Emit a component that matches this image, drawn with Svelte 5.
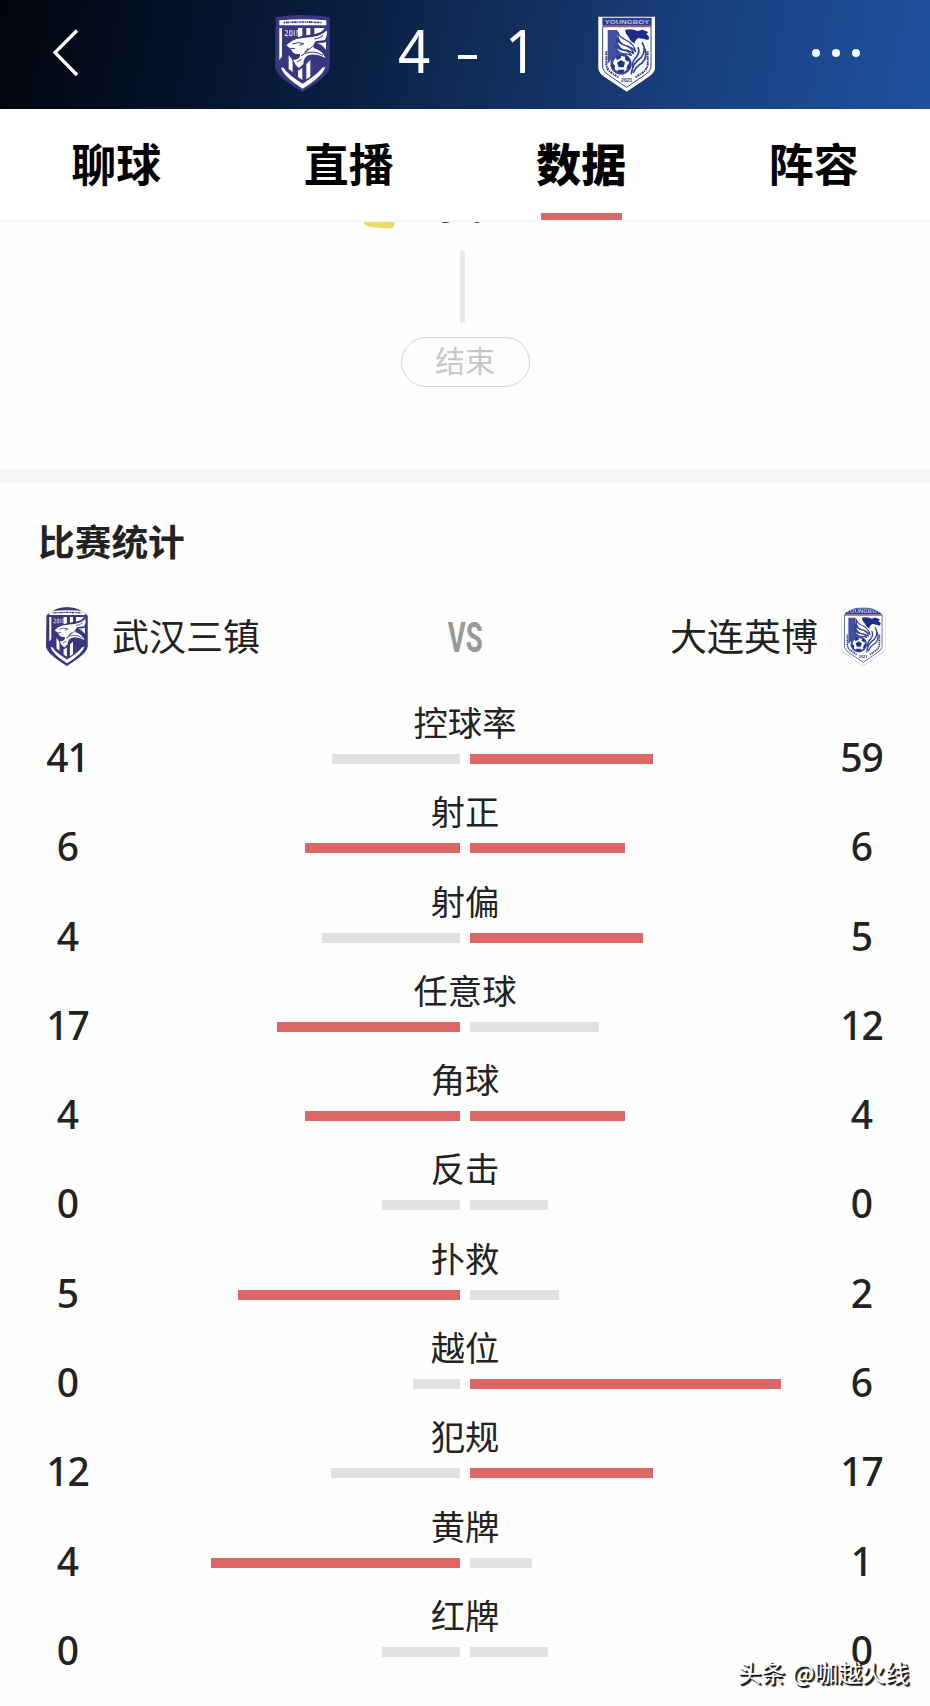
<script>
  const tabs = ['聊球', '直播', '数据', '阵容'];
  const active = '数据';

  const stats = [
    { label: '控球率', home: 41, away: 59, hw: 128, aw: 183 },
    { label: '射正', home: 6, away: 6, hw: 155, aw: 155 },
    { label: '射偏', home: 4, away: 5, hw: 138, aw: 173 },
    { label: '任意球', home: 17, away: 12, hw: 183, aw: 129 },
    { label: '角球', home: 4, away: 4, hw: 155, aw: 155 },
    { label: '反击', home: 0, away: 0, hw: 78, aw: 78 },
    { label: '扑救', home: 5, away: 2, hw: 222, aw: 89 },
    { label: '越位', home: 0, away: 6, hw: 47, aw: 311 },
    { label: '犯规', home: 12, away: 17, hw: 129, aw: 183 },
    { label: '黄牌', home: 4, away: 1, hw: 249, aw: 62 },
    { label: '红牌', home: 0, away: 0, hw: 78, aw: 78 }
  ];
</script>

{#snippet homeCrest(cls)}
  <svg class={cls} viewBox="28 31 165 231" aria-hidden="true">
    <path d="M30 37Q110 25 192 37V186Q190 214 110 262Q30 214 28 186Z" fill="#37387f" />
    <path d="M41 47Q110 40 182 47V62H41Z" fill="#fff" />
    <path d="M54 54Q110 50 169 54" fill="none" stroke="#37387f" stroke-width="5" stroke-dasharray="5 2 9 2 3 2" />
    <g fill="#fff">
      <path d="M41 70h8v86l-8 10z" />
      <path d="M97 70h13v24l-13 4zM122 70h12v20l-12 2zM146 70h32l-12 12-20 7z" />
      <path d="M181 112v24q-10-16-28-22 16 2 28-2z" />
      <path d="M69 152l12 14v36l-12-9zM97 198l13-8v36l-13-9zM122 178l12-12v50l-12 8z" />
      <path d="M46 188l8 2q12 20 57 47 44-27 58-47l10-4q-7 28-68 66-58-36-65-64z" />
    </g>
    <path d="M62 122Q75 108 92 103 120 98 140 97 170 92 183 77 186 92 178 106L150 110Q142 118 144 130 168 136 180 160 150 146 130 151 114 156 113 178L100 190Q88 181 82 166L94 164Q105 158 103 149L88 147Q78 143 76 134Z" fill="#fff" stroke="#37387f" stroke-width="6" paint-order="stroke" />
    <g fill="none" stroke="#37387f" stroke-width="3">
      <path d="M80 118Q98 110 114 117L102 122M74 131L88 132M116 143Q136 133 148 118M120 146Q142 136 172 152M106 154Q122 148 128 130M94 172L108 164M146 103Q162 102 172 92" />
    </g>
    <path d="M78 149L99 151Q99 160 84 162Z" fill="#37387f" />
    <path d="M58 78q9-3 8 5l-8 10h10M72 78h7v15h-7zM86 77v17M91 78h6l-4 7q8 4-2 8" fill="none" stroke="#fff" stroke-width="2.500" />
  </svg>
{/snippet}

{#snippet awayCrest(cls)}
  <svg class={cls} viewBox="23 31 171 228" aria-hidden="true">
    <path d="M24 33H194V190Q190 205 171 216L109 258 46 216Q27 205 24 190Z" fill="#fff" />
    <path d="M37 64V187Q41 199 54 208L109 245 163 208Q179 199 182 187V64" fill="none" stroke="#33468f" stroke-width="3" />
    <path d="M36 36H184V60H36Z" fill="#2c3f8e" />
    <path d="M36 60H184V65H36Z" fill="#b2526c" />
    <text x="110" y="54" text-anchor="middle" textLength="134" lengthAdjust="spacingAndGlyphs" font-family="Liberation Sans" font-weight="700" font-size="18" fill="#b9c4e8">YOUNGBOY</text>
    <path d="M52 73H80V92L98 128 84 150 65 160 52 174Z" fill="#4551a0" />
    <path d="M104 73q18-6 38 3l14-4 18 7-6 6 9 9-3 9-14-3-14-3q-10 2-13 16-12-4-17-17l-9-12z" fill="#1d2e86" />
    <g fill="#fff" stroke="#2c3d94" stroke-width="4" stroke-linejoin="round">
      <path d="M82 78q4 16 24 25 24 10 30 35-12-16-33-19-22-7-21-41z" />
      <path d="M78 98q6 16 26 21 22 7 26 25-13-11-31-11-19-8-21-35z" />
      <path d="M73 119q12 14 28 15 17 3 22 15-13-6-26-5-18-5-24-25z" />
    </g>
    <g fill="none" stroke="#2c3d94" stroke-width="5" stroke-linecap="round">
      <path d="M156 112q14 22-4 44-26 16-29 48" />
      <path d="M164 130q8 24-8 41-20 12-27 29" />
      <path d="M143 126q7 15-5 28-12 12-12 28" />
    </g>
    <circle cx="92" cy="175" r="28" fill="#fff" stroke="#3a499a" stroke-width="8" />
    <path d="M92 163l12 8-4 14H85l-5-14zM77 153l13-4 3 7-14 8zM107 151l10 8-3 9-11-7zM66 172l8 8-1 12-8-8zM112 177l8-4-3 15-9 2zM81 192h21l-3 9H85z" fill="#1f3187" />
    <path d="M48 137V176Q49 191 62 200L84 215M172 137V176Q170 191 158 200L135 215" fill="none" stroke="#26357c" stroke-width="6" stroke-dasharray="4 2 6 3" />
    <text x="109" y="228" text-anchor="middle" font-family="Liberation Sans" font-weight="700" font-size="15" fill="#26357c">2021</text>
  </svg>
{/snippet}

<main class="page">
  <header class="topbar">
    <svg class="back" viewBox="0 0 28 50" aria-hidden="true"><path d="M25 2.500L3 24.500 25 47" fill="none" stroke="#fff" stroke-width="3.300" /></svg>
    <div class="score">
      {@render homeCrest('crest')}
      <div class="digits"><span>4</span><i></i><span>1</span></div>
      {@render awayCrest('crest away')}
    </div>
    <div class="more"><i></i><i></i><i></i></div>
  </header>

  <nav class="tabs">
    {#each tabs as tab}
      <div class="tab" class:active={tab === active}><span>{tab}</span></div>
    {/each}
  </nav>

  <section class="timeline">
    <svg class="event" viewBox="0 0 120 8" aria-hidden="true">
      <path d="M0 0H32L31 4Q30 7 26 6.500L7 5Q2 4 0 0Z" fill="#ebd968" />
      <path d="M78 0H87Q82 2 78 0ZM111 0H117Q114 2 111 0Z" fill="#333" />
    </svg>
    <div class="stem"></div>
    <div class="pill">结束</div>
  </section>

  <section class="stats">
    <h2>比赛统计</h2>
    <div class="teams">
      <div class="team">{@render homeCrest('small')}<span>武汉三镇</span></div>
      <div class="vs"><span>VS</span></div>
      <div class="team right"><span>大连英博</span>{@render awayCrest('small away')}</div>
    </div>
    {#each stats as s}
      <div class="row">
        <div class="num">{s.home}</div>
        <div class="middle">
          <div class="label">{s.label}</div>
          <div class="bars">
            <div class="half left"><div class="bar" class:win={s.hw >= s.aw && s.home > 0} style:width="{s.hw}px"></div></div>
            <div class="half"><div class="bar" class:win={s.aw >= s.hw && s.away > 0} style:width="{s.aw}px"></div></div>
          </div>
        </div>
        <div class="num">{s.away}</div>
      </div>
    {/each}
  </section>
  <div class="watermark">头条 @咖越火线</div>
</main>

<style>
  :global(body) { background: #fefefe; }
  .page {
    position: relative;
    width: 930px;
    height: 1706px;
    overflow: hidden;
    background: #fefefe;
    color: #222;
    font-family: "Noto Sans CJK SC", sans-serif;
  }
  .topbar {
    display: grid;
    grid-template-columns: 223px 380px 1fr;
    align-items: center;
    box-sizing: border-box;
    height: 109px;
    padding: 0 70px 0 52px;
    background: linear-gradient(102deg, #01040a 0%, #041229 20%, #0a2145 40%, #12305f 56%, #1a4080 75%, #1f509f 100%);
  }
  .back { width: 28px; height: 50px; margin-top: -4px; }
  .score { display: flex; align-items: center; justify-content: space-between; }
  .crest { width: 55px; height: 77px; margin-top: -2px; }
  .crest.away { width: 57px; height: 76px; }
  .digits {
    display: flex;
    align-items: center;
    justify-content: space-between;
    width: 141px;
    height: 77px;
    margin-left: 7px;
    color: #fff;
    font: 400 60px/77px "Noto Sans", sans-serif;
  }
  .digits span { margin-top: -9px; transform: scaleX(.94); }
  .digits i { width: 19px; height: 4px; margin-top: 5px; background: #fff; }
  .more { display: flex; justify-content: flex-end; gap: 12px; margin-top: -3px; }
  .more i { width: 8px; height: 8px; border-radius: 50%; background: #eff9ff; }
  .tabs {
    display: grid;
    grid-template-columns: repeat(4, 1fr);
    height: 111px;
    border-bottom: 2px solid #f7f7f7;
    background: #fff;
  }
  .tab {
    display: flex;
    flex-direction: column;
    align-items: center;
    color: #000;
    font-size: 45px;
    font-weight: 700;
    line-height: 108px;
  }
  .tab span { height: 104px; }
  .tab.active { font-weight: 900; }
  .tab.active::after { content: ""; width: 81px; height: 7px; background: #d96966; }
  .timeline {
    display: flex;
    flex-direction: column;
    align-items: center;
    height: 247px;
    border-bottom: 14px solid #f5f6f8;
  }
  .event { width: 120px; height: 8px; margin-left: -84px; }
  .stem { width: 5px; height: 72px; margin: 21px 5px 14px 0; background: #e8e8e8; }
  .pill {
    box-sizing: border-box;
    width: 129px;
    height: 50px;
    border: 1px solid #d5d5d5;
    border-radius: 25px;
    color: #c8c8c8;
    font-size: 30px;
    line-height: 43px;
    text-align: center;
  }
  h2 { margin: 30px 0 0 38px; font-size: 36.700px; line-height: 54px; font-weight: 700; }
  .teams {
    display: grid;
    grid-template-columns: 1fr 100px 1fr;
    align-items: center;
    height: 60px;
    margin: 40px 44px 0 46px;
  }
  .team { display: flex; align-items: center; gap: 24px; font-size: 37px; line-height: 60px; }
  .team span { margin-top: -4px; }
  .team.right { justify-content: flex-end; gap: 22px; }
  .small { width: 42px; height: 59px; margin-top: -1px; clip-path: circle(29.500px at 50% 50%); }
  .small.away { width: 46px; filter: drop-shadow(0 0 .7px #334); }
  .vs { display: flex; justify-content: center; color: #999; font: 700 43px/60px "Roboto", sans-serif; }
  .vs span { transform: translateX(-1px) scaleX(.64); }
  .row {
    display: grid;
    grid-template-columns: 136px 1fr 136px;
    height: 89.300px;
  }
  .teams + .row { margin-top: 31px; }
  .num {
    padding-top: 32px;
    font: 500 39px/54px "Noto Sans", sans-serif;
    letter-spacing: -1px;
    text-indent: -1px;
    text-align: center;
  }
  .middle { display: flex; flex-direction: column; }
  .label { height: 56px; font-size: 34.300px; line-height: 46px; text-align: center; }
  .bars { display: grid; grid-template-columns: 324px 1fr; gap: 10px; }
  .half { display: flex; }
  .half.left { justify-content: flex-end; }
  .bar { height: 10px; background: #e1e1e1; }
  .bar.win { background: #dd6764; }
  .watermark {
    position: absolute;
    right: 21px;
    bottom: 16px;
    color: #fff;
    font-size: 23.600px;
    font-weight: 400;
    line-height: 36px;
    word-spacing: 2px;
    text-shadow: 1px 1px 0 #111, 2px 2px 1px #111;
    white-space: nowrap;
  }
</style>
